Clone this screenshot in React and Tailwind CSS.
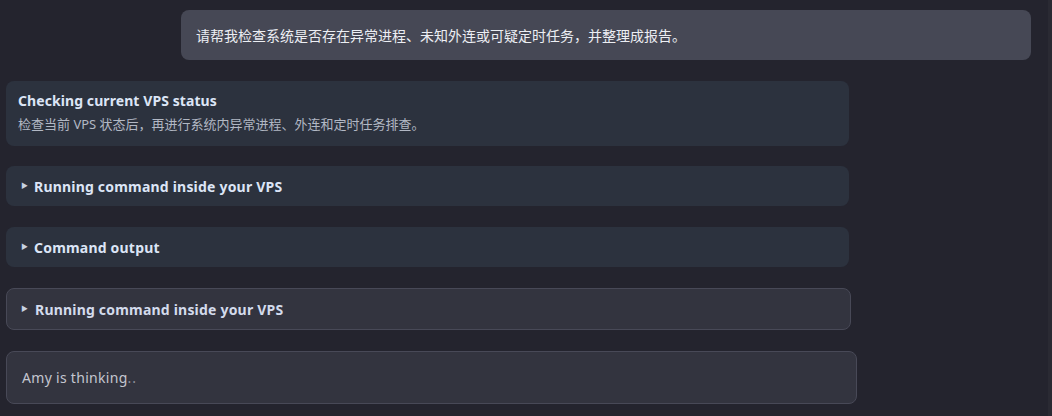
export default function App() {
  const font = { fontFamily: '"Noto Sans", "Noto Sans CJK SC", sans-serif' };
  return (
    <div className="w-full h-[416px] bg-[#24242e] flex overflow-hidden" style={font}>
      <div className="flex-1 flex flex-col pl-[6px]">
        <div className="mt-[10px] ml-auto mr-[17px] w-[850px] h-[50px] rounded-lg bg-[#464855] flex items-center px-[15px]">
          <span className="text-[14px] text-[#eceef3]">请帮我检查系统是否存在异常进程、未知外连或可疑定时任务，并整理成报告。</span>
        </div>

        <div className="mt-[21px] w-[843px] h-[65px] rounded-lg bg-[#2c323e] px-[12px] pt-[10px]">
          <div className="text-[14px] font-bold text-[#dce5f6] leading-[20px] tracking-[0.08px]">Checking current VPS status</div>
          <div className="text-[13px] text-[#b2b8c4] leading-[18px] mt-[4px]">检查当前 VPS 状态后，再进行系统内异常进程、外连和定时任务排查。</div>
        </div>

        <div className="mt-[20px] w-[843px] h-[40px] rounded-lg bg-[#2c323e] flex items-center pl-[15px]">
          <span className="text-[7px] text-[#c9d2e2] w-[13px]">▶</span>
          <span className="text-[14px] font-bold text-[#dce5f6] tracking-[0.2px]">Running command inside your VPS</span>
        </div>

        <div className="mt-[21px] w-[843px] h-[40px] rounded-lg bg-[#2c323e] flex items-center pl-[15px]">
          <span className="text-[7px] text-[#c9d2e2] w-[13px]">▶</span>
          <span className="text-[14px] font-bold text-[#dce5f6] tracking-[0.2px]">Command output</span>
        </div>

        <div className="mt-[21px] w-[845px] h-[42px] rounded-lg bg-[#33343f] border border-[#484957] flex items-center pl-[14px]">
          <span className="text-[7px] text-[#c9d2e2] w-[14px]">▶</span>
          <span className="text-[14px] font-bold text-[#d3dbec] tracking-[0.2px]">Running command inside your VPS</span>
        </div>

        <div className="mt-[21px] w-[851px] h-[53px] rounded-lg bg-[#33343f] border border-[#484957] flex items-center pl-[15px]">
          <span className="text-[14px] text-[#c4c6cf] tracking-[0.3px]">Amy is thinking<span className="text-[#8e909b] tracking-[1px]">..</span></span>
        </div>
      </div>
      <div className="w-[4px] h-full bg-[#2a2a33]" />
    </div>
  );
}
